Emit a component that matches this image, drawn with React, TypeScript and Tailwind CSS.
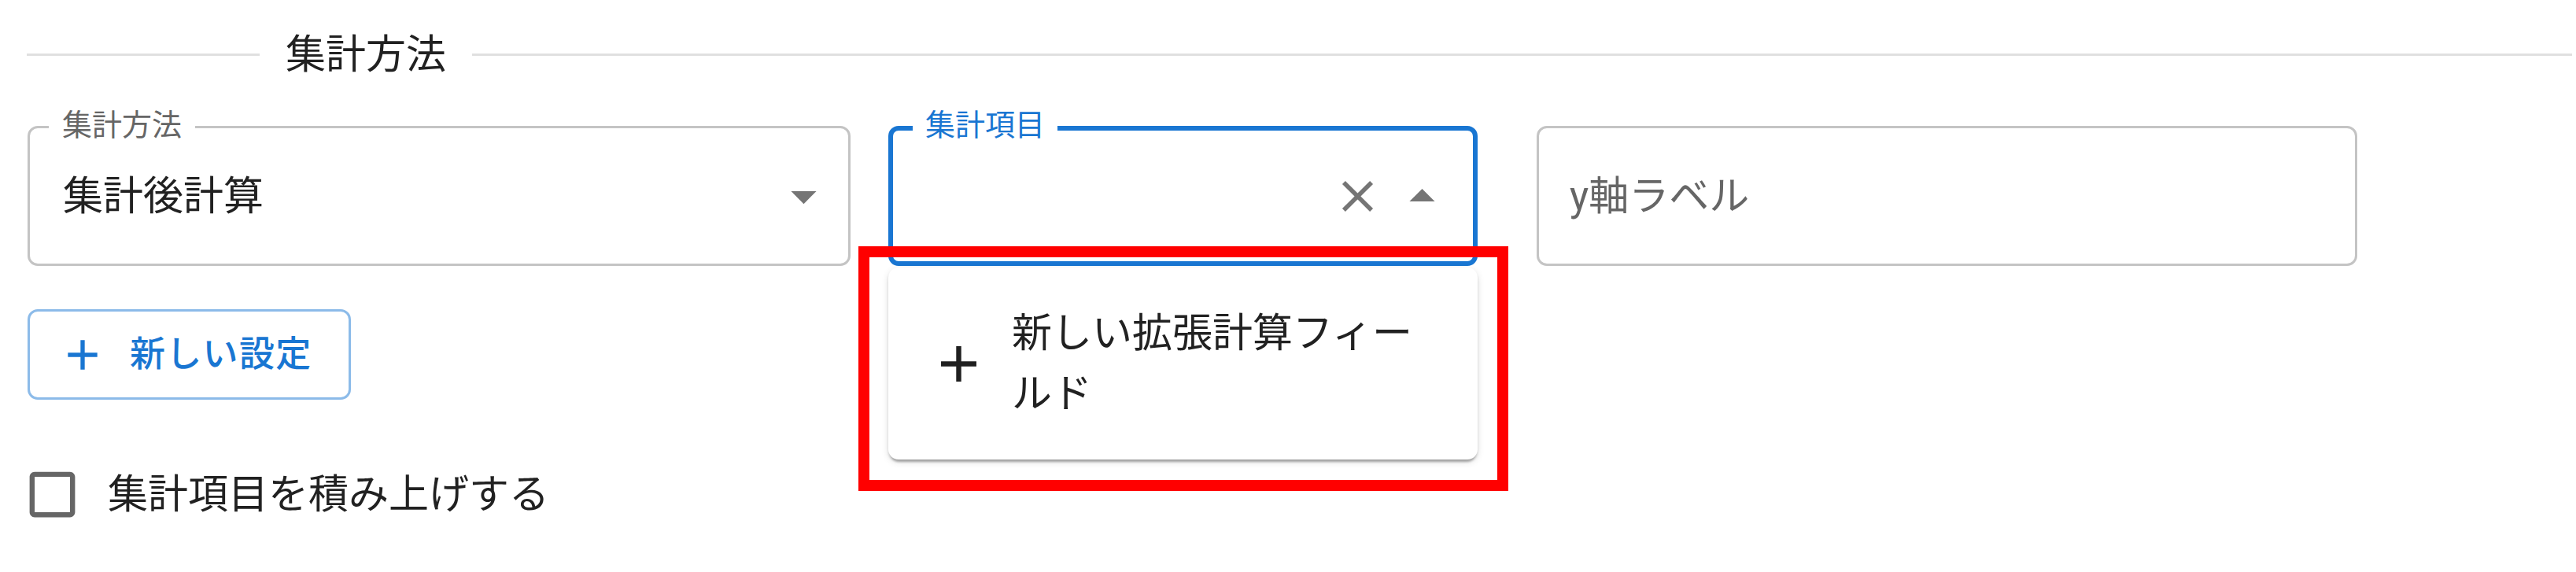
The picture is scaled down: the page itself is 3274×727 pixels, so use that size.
import React from "react";

const CloseIcon = ({ className }: { className?: string }) => (
  <svg viewBox="0 0 24 24" className={className} fill="currentColor">
    <path d="M19 6.41 17.59 5 12 10.59 6.41 5 5 6.41 10.59 12 5 17.59 6.41 19 12 13.41 17.59 19 19 17.59 13.41 12z" />
  </svg>
);

const ArrowDown = ({ className }: { className?: string }) => (
  <svg viewBox="0 0 24 24" className={className} fill="currentColor">
    <path d="M7 10l5 5 5-5z" />
  </svg>
);

const ArrowUp = ({ className }: { className?: string }) => (
  <svg viewBox="0 0 24 24" className={className} fill="currentColor">
    <path d="m7 14 5-5 5 5z" />
  </svg>
);

const AddIcon = ({ className }: { className?: string }) => (
  <svg viewBox="0 0 24 24" className={className} fill="currentColor">
    <path d="M19 13h-6v6h-2v-6H5v-2h6V5h2v6h6z" />
  </svg>
);

const CheckBlank = ({ className }: { className?: string }) => (
  <svg viewBox="0 0 24 24" className={className} fill="currentColor">
    <path d="M19 5v14H5V5h14m0-2H5c-1.11 0-2 .9-2 2v14c0 1.1.89 2 2 2h14c1.1 0 2-.9 2-2V5c0-1.1-.9-2-2-2z" />
  </svg>
);

export default function App() {
  return (
    <div className="w-[3274px] h-[727px] bg-white overflow-hidden font-['Roboto','Noto_Sans_CJK_JP',sans-serif] text-[#212121] pl-[34px]">
      {/* Divider with title */}
      <div className="mt-[31px] w-[3235px] h-[77px] flex items-center">
        <div className="w-[296px] h-[3px] bg-[#e0e0e0]" />
        <div className="px-[33px] text-[51px] leading-[77px] whitespace-nowrap">集計方法</div>
        <div className="flex-1 h-[3px] bg-[#e0e0e0]" />
      </div>

      {/* Fields row */}
      <div className="mt-[52px] ml-px flex h-[178px]">
        {/* Select 1 */}
        <div className="relative w-[1046px] h-[178px] border-[3px] border-[#c4c4c4] rounded-[13px] flex items-center pl-[42px] pr-[18px]">
          <span className="absolute left-[24px] top-[-4px] -translate-y-1/2 px-[17px] bg-white text-[38px] leading-none text-[#666666] whitespace-nowrap">
            集計方法
          </span>
          <span className="flex-1 text-[51px] leading-[77px]">集計後計算</span>
          <ArrowDown className="w-[77px] h-[77px] text-[#757575]" />
        </div>

        {/* Select 2 (focused autocomplete) */}
        <div className="relative ml-[48px] w-[749px] h-[178px]">
          <div className="relative w-full h-full border-[6px] border-[#1976d2] rounded-[13px] flex items-center justify-end pr-[26px] gap-[10px]">
            <span className="absolute left-[25px] top-[-7px] -translate-y-1/2 px-[16px] bg-white text-[38px] leading-none text-[#1976d2] whitespace-nowrap">
              集計項目
            </span>
            <CloseIcon className="w-[67px] h-[67px] text-[#757575]" />
            <ArrowUp className="w-[77px] h-[77px] text-[#757575]" />
          </div>

          {/* Dropdown paper */}
          <div className="absolute left-0 top-[180px] w-[749px] bg-white rounded-[13px] py-[26px] shadow-[0_6px_3px_-3px_rgba(0,0,0,0.2),0_3px_3px_0_rgba(0,0,0,0.14),0_3px_10px_0_rgba(0,0,0,0.12)] z-10">
            <div className="flex items-center px-[51px] py-[19px]">
              <AddIcon className="w-[77px] h-[77px] shrink-0 text-[#1f1f1f]" />
              <span className="ml-[29px] flex-1 min-w-0 text-[51px] leading-[77px]">
                新しい拡張計算フィールド
              </span>
            </div>
          </div>

          {/* Red annotation rectangle */}
          <div className="absolute left-[-38px] top-[153px] w-[826px] h-[311px] border-[14px] border-[#ff0000] z-20 pointer-events-none" />
        </div>

        {/* Text field y-axis label */}
        <div className="ml-[75px] w-[1043px] h-[178px] border-[3px] border-[#c4c4c4] rounded-[13px] flex items-center pl-[39px]">
          <span className="text-[51px] leading-[77px] text-[#666666]">y軸ラベル</span>
        </div>
      </div>

      {/* New setting button */}
      <div className="mt-[55px] ml-px w-[411px] h-[115px] border-[3px] border-[#8cbbe9] rounded-[13px] flex items-center pl-[35px] text-[#1976d2]">
        <AddIcon className="w-[64px] h-[64px] shrink-0" />
        <span className="ml-[28px] text-[45px] font-medium tracking-[1.3px] leading-none whitespace-nowrap">新しい設定</span>
      </div>

      {/* Checkbox row */}
      <div className="mt-[82px] ml-[-6px] flex items-center h-[77px]">
        <CheckBlank className="w-[77px] h-[77px] text-[#666666]" />
        <span className="ml-[32px] text-[51px] leading-[77px] whitespace-nowrap">集計項目を積み上げする</span>
      </div>
    </div>
  );
}
